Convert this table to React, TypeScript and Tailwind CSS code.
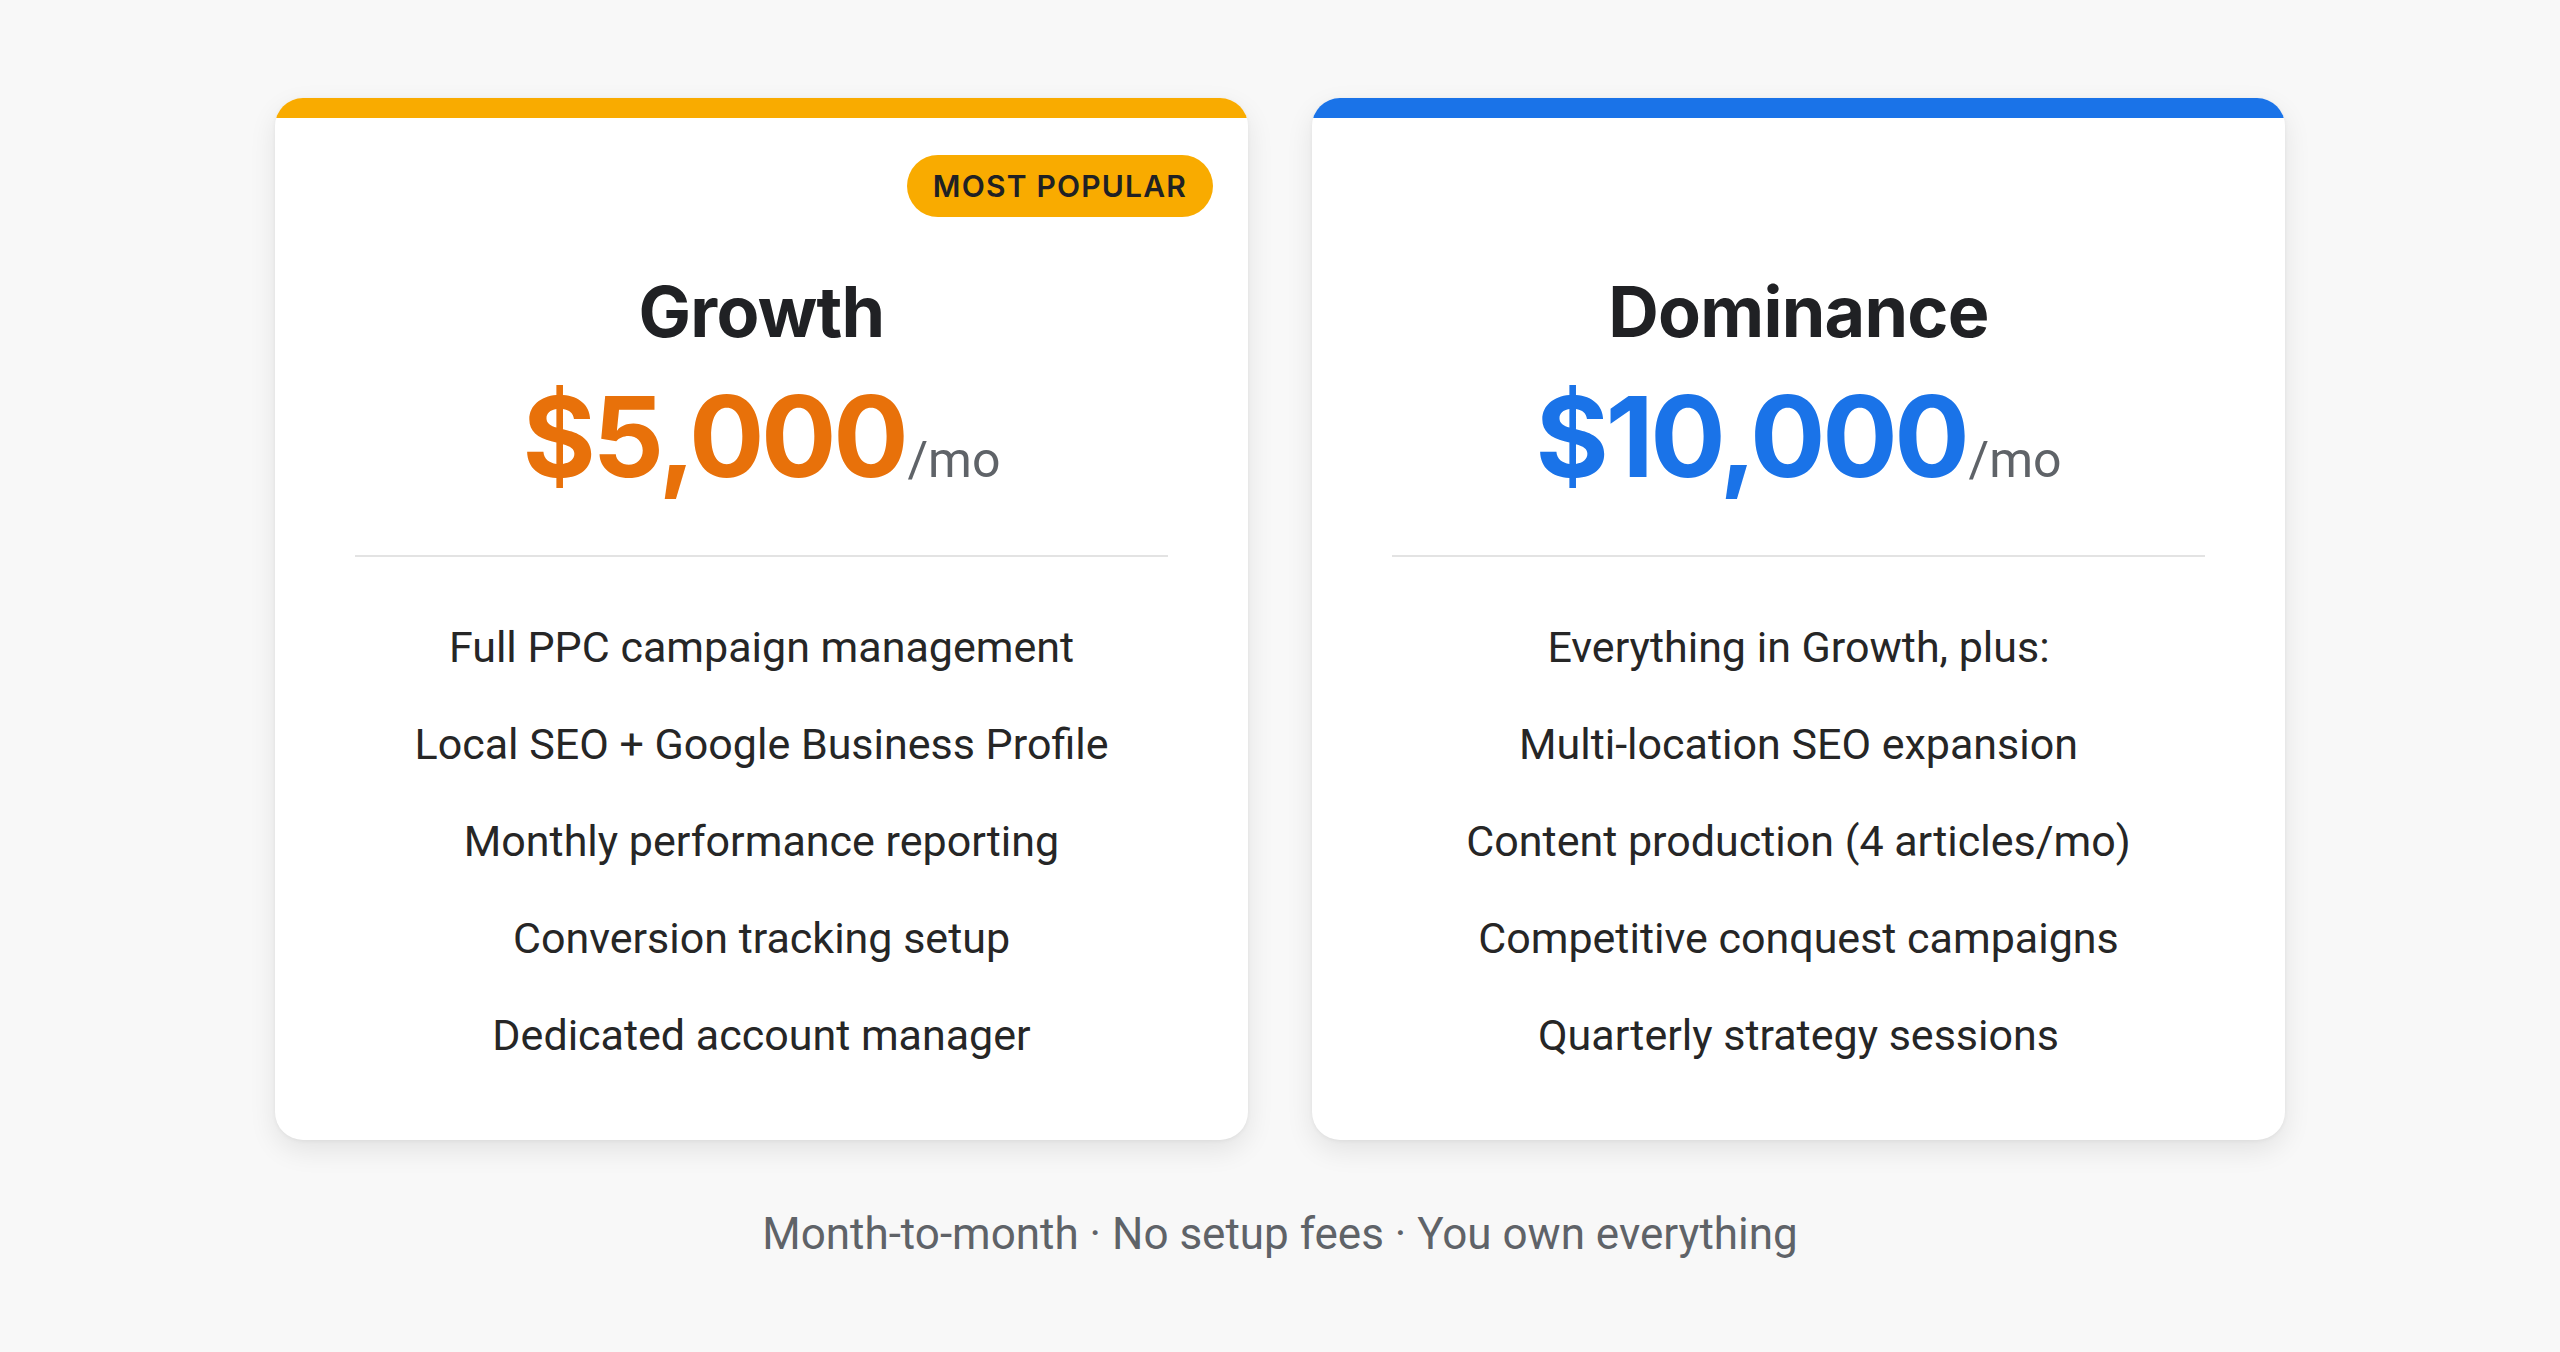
import React from "react";

type Plan = {
  name: string;
  price: string;
  priceColor: string;
  barColor: string;
  badge?: string;
  features: string[];
};

const plans: Plan[] = [
  {
    name: "Growth",
    price: "$5,000",
    priceColor: "text-[#E8710A]",
    barColor: "bg-[#F9AB00]",
    badge: "MOST POPULAR",
    features: [
      "Full PPC campaign management",
      "Local SEO + Google Business Profile",
      "Monthly performance reporting",
      "Conversion tracking setup",
      "Dedicated account manager",
    ],
  },
  {
    name: "Dominance",
    price: "$10,000",
    priceColor: "text-[#1A73E8]",
    barColor: "bg-[#1A73E8]",
    features: [
      "Everything in Growth, plus:",
      "Multi-location SEO expansion",
      "Content production (4 articles/mo)",
      "Competitive conquest campaigns",
      "Quarterly strategy sessions",
    ],
  },
];

function Card({ plan }: { plan: Plan }) {
  return (
    <div className="relative flex w-[973px] flex-col overflow-hidden rounded-[28px] bg-white shadow-[0_10px_28px_rgba(0,0,0,0.09),0_1px_4px_rgba(0,0,0,0.05)]">
      <div className={`h-[20px] w-full ${plan.barColor}`} />
      {plan.badge && (
        <div className="absolute right-[35px] top-[57px] flex h-[62px] items-center rounded-full bg-[#F9AB00] px-[26px] text-[30px] font-semibold tracking-[0.04em] text-[#202124] [font-family:Inter,'Noto_Sans',sans-serif]">
          {plan.badge}
        </div>
      )}
      <div className="flex flex-col items-center pt-[159px] pb-[56px]">
        <div className="text-[70px] font-bold leading-none tracking-[-0.01em] text-[#202124] [font-family:Inter,'Noto_Sans',sans-serif]">
          {plan.name}
        </div>
        <div className="mt-[33px] flex items-baseline leading-none [font-family:Inter,'Noto_Sans',sans-serif]">
          <span className={`text-[112px] font-bold leading-none tracking-[-0.03em] ${plan.priceColor}`}>
            {plan.price}
          </span>
          <span className="ml-[2px] text-[50px] font-normal leading-none text-[#5f6368] [font-family:Roboto,sans-serif]">
            /mo
          </span>
        </div>
        <div className="mt-[63px] h-[2px] w-[813px] bg-[#e3e3e3]" />
        <ul className="mt-[42px] flex flex-col items-center">
          {plan.features.map((f) => (
            <li
              key={f}
              className="text-center text-[43px] leading-[97px] text-[#262626] [font-family:Roboto,sans-serif]"
            >
              {f}
            </li>
          ))}
        </ul>
      </div>
    </div>
  );
}

export default function App() {
  return (
    <div className="flex min-h-[1352px] w-full flex-col items-center bg-[#f8f8f8] pt-[98px]">
      <div className="flex gap-[64px]">
        {plans.map((p) => (
          <Card key={p.name} plan={p} />
        ))}
      </div>
      <div className="mt-[64px] text-[44px] leading-[60px] text-[#5f6368] [font-family:Roboto,sans-serif]">
        Month-to-month · No setup fees · You own everything
      </div>
    </div>
  );
}
